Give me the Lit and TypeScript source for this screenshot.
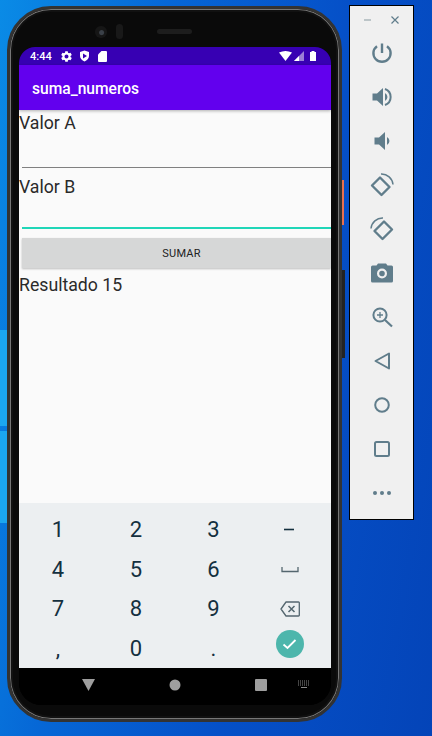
import { LitElement, html, css, svg } from 'lit';
import { customElement } from 'lit/decorators.js';

const TOOL_ICONS = [
  // power
  svg`<path d="M12 2.500v9.500" fill="none" stroke="currentColor" stroke-width="2.400"/><path d="M7 5.200a8.600 8.600 0 1 0 10 0" fill="none" stroke="currentColor" stroke-width="2.400"/>`,
  // volume up
  svg`<path d="M2.500 8.500v7h4.500l6 5.500V3L7 8.500z" fill="currentColor"/><path d="M15 8a4.500 4.500 0 0 1 0 8z" fill="currentColor"/><path d="M15 4a8.500 8.500 0 0 1 0 16" fill="none" stroke="currentColor" stroke-width="2"/>`,
  // volume down
  svg`<path d="M4.500 8.500v7H9l6 5.500V3L9 8.500z" fill="currentColor"/><path d="M17 8a4.500 4.500 0 0 1 0 8z" fill="currentColor"/>`,
  // rotate left
  svg`<path d="M2 12.500 10 4.500 19.500 14 11.500 22z" fill="none" stroke="currentColor" stroke-width="2.400" stroke-linejoin="round"/><path d="M11 1a11.500 11.500 0 0 1 12 10.500" fill="none" stroke="currentColor" stroke-width="1.500"/>`,
  // rotate right
  svg`<path d="M22 12.500 14 4.500 4.500 14 12.500 22z" fill="none" stroke="currentColor" stroke-width="2.400" stroke-linejoin="round"/><path d="M13 1A11.500 11.500 0 0 0 1 11.500" fill="none" stroke="currentColor" stroke-width="1.500"/>`,
  // camera
  svg`<path fill-rule="evenodd" fill="currentColor" d="M8 2.500 6.500 4.500H2.500A1.500 1.500 0 0 0 1 6v14a1.500 1.500 0 0 0 1.500 1.500h19A1.500 1.500 0 0 0 23 20V6a1.500 1.500 0 0 0-1.500-1.500h-4L16 2.500zM12 7.500a5 5 0 1 1 0 10 5 5 0 0 1 0-10zm0 2.200a2.800 2.800 0 1 0 0 5.600 2.800 2.800 0 0 0 0-5.600z"/>`,
  // zoom
  svg`<circle cx="10" cy="10" r="6.600" fill="none" stroke="currentColor" stroke-width="2"/><path d="M15 15l7 6.500" fill="none" stroke="currentColor" stroke-width="2.200"/><path d="M10 7v6M7 10h6" fill="none" stroke="currentColor" stroke-width="1.300"/>`,
  // back
  svg`<path d="M19 4.500v15L5.500 12z" fill="none" stroke="currentColor" stroke-width="2" stroke-linejoin="round"/>`,
  // home
  svg`<circle cx="12" cy="12" r="6.800" fill="none" stroke="currentColor" stroke-width="2"/>`,
  // overview
  svg`<rect x="5" y="5" width="14" height="14" rx="1.500" fill="none" stroke="currentColor" stroke-width="2"/>`,
  // more
  svg`<circle cx="5" cy="12" r="2" fill="currentColor"/><circle cx="12" cy="12" r="2" fill="currentColor"/><circle cx="19" cy="12" r="2" fill="currentColor"/>`,
];

const KEYS = ['1', '2', '3', '-', '4', '5', '6', 'space', '7', '8', '9', 'del', ',', '0', '.', 'ok'];

@customElement('app-root')
export class AppRoot extends LitElement {
  static styles = css`
    :host {
      display: block;
      position: relative;
      width: 432px;
      height: 736px;
      overflow: hidden;
      font-family: Roboto, sans-serif;
      background: linear-gradient(100deg, #0a8be6 0%, #0667d6 30%, #0550c8 62%, #0444b8 100%);
    }

    .pane {
      position: absolute;
      left: 0;
      width: 8px;
      background: #1ba6f0;
    }

    .pane.one {
      top: 330px;
      height: 96px;
    }

    .pane.two {
      top: 431px;
      height: 92px;
    }

    .phone {
      position: absolute;
      left: 7px;
      top: 6px;
      width: 335px;
      height: 716px;
      box-sizing: border-box;
      padding: 38px 8px 14px 9px;
      border-radius: 44px;
      background: #0a0a0a;
      border: 3px solid #333;
      box-shadow: inset 0 0 0 1px #777, inset 0 0 0 3px #111;
    }

    .camera {
      position: absolute;
      left: 85px;
      top: 17px;
      width: 12px;
      height: 12px;
      border-radius: 50%;
      background: radial-gradient(circle at 55% 55%, #3a4048 0 2px, #161616 3px);
    }

    .sensor {
      position: absolute;
      left: 106px;
      top: 15px;
      width: 7px;
      height: 15px;
      border-radius: 4px;
      background: #191919;
    }

    .speaker {
      position: absolute;
      left: 147px;
      top: 20px;
      width: 35px;
      height: 5px;
      border-radius: 3px;
      background: #1d1d1d;
    }

    .btn-orange {
      position: absolute;
      left: 342px;
      top: 180px;
      width: 2px;
      height: 45px;
      background: #e8704f;
    }

    .btn-dark {
      position: absolute;
      left: 342px;
      top: 270px;
      width: 3px;
      height: 88px;
      background: #232323;
    }

    .screen {
      display: flex;
      flex-direction: column;
      height: 100%;
      border-radius: 16px 16px 22px 22px;
      overflow: hidden;
      background: #000;
    }

    .status {
      flex: 0 0 18px;
      display: flex;
      align-items: center;
      gap: 6px;
      padding: 0 15px 0 11px;
      background: #3700b3;
      color: #fff;
      font-size: 11px;
      font-weight: 500;
    }

    .status svg {
      display: block;
    }

    .status .time {
      margin-right: 2px;
    }

    .status .spacer {
      flex: 1;
    }

    .status .right {
      display: flex;
      align-items: center;
      gap: 2px;
    }

    .appbar {
      flex: 0 0 45px;
      display: flex;
      align-items: center;
      box-sizing: border-box;
      padding: 2px 0 0 13px;
      background: #6200ee;
      color: #fff;
      font-size: 15.600px;
      font-weight: 500;
      box-shadow: 0 1px 3px rgba(0, 0, 0, 0.3);
      position: relative;
    }

    .content {
      flex: 0 0 393px;
      display: flex;
      flex-direction: column;
      background: #fafafa;
      color: #2a2a2a;
      font-size: 17.700px;
      line-height: 21px;
    }

    .label {
      height: 21px;
      margin-top: 3px;
    }

    .field {
      height: 34px;
      margin-left: 3px;
      border-bottom: 1px solid #808080;
      box-sizing: border-box;
    }

    .field.focus {
      height: 31px;
      border-bottom: 2px solid #1fd6b8;
    }

    .gap-b {
      margin-top: 9px;
    }

    .button {
      height: 30px;
      margin: 9px 0 0 3px;
      padding-left: 10px;
      display: flex;
      align-items: center;
      justify-content: center;
      background: #d6d7d7;
      color: #222;
      font-size: 11px;
      box-shadow: 0 1px 2px rgba(0, 0, 0, 0.25);
      letter-spacing: 0.2px;
    }

    .result {
      margin-top: 7px;
    }

    .keyboard {
      flex: 0 0 164px;
      display: grid;
      grid-template-columns: 78px 78px 77px 75px;
      grid-auto-rows: 39.500px;
      background: #eceff1;
      color: #14303f;
      font-size: 22px;
      padding-top: 7px;
      box-sizing: border-box;
    }

    .key {
      display: flex;
      align-items: center;
      justify-content: center;
      height: 39.500px;
    }

    .key.low {
      align-items: flex-end;
      padding-bottom: 7px;
      box-sizing: border-box;
    }

    .ok {
      width: 28px;
      height: 28px;
      border-radius: 50%;
      background: #4db6ac;
      display: flex;
      align-items: center;
      justify-content: center;
      margin-top: -8px;
    }

    .nav {
      flex: 1;
      display: flex;
      align-items: center;
      padding: 0 0 4px 63px;
      background: #000;
      box-sizing: border-box;
    }

    .nav svg {
      display: block;
    }

    .nav .circle {
      margin-left: 74px;
    }

    .nav .square {
      margin-left: 74px;
    }

    .nav .kbd {
      margin-left: 30px;
    }

    .toolbar {
      position: absolute;
      left: 349px;
      top: 5px;
      width: 65px;
      height: 515px;
      box-sizing: border-box;
      border: 1px solid #000;
      background: #f0f0f0;
      display: flex;
      flex-direction: column;
      align-items: center;
      color: #607d8b;
    }

    .win {
      height: 25px;
      align-self: stretch;
      display: flex;
      align-items: center;
      justify-content: space-between;
      padding: 2px 14px 0 14px;
      box-sizing: border-box;
    }

    .tool {
      flex: 0 0 44px;
      display: flex;
      align-items: center;
      justify-content: center;
    }
  `;

  private renderKey(key: string) {
    if (key === 'space') {
      return html`<div class="key">
        <svg width="18" height="7" viewBox="0 0 18 7"><path d="M1 1v4.500h16V1" fill="none" stroke="#54666f" stroke-width="1.300" /></svg>
      </div>`;
    }
    if (key === 'del') {
      return html`<div class="key">
        <svg width="20" height="16" viewBox="0 0 20 16">
          <path d="M6 1h12.500a.8.8 0 0 1 .8.8v12.400a.8.8 0 0 1-.8.8H6L1 8z" fill="none" stroke="#54666f" stroke-width="1.300" stroke-linejoin="round" />
          <path d="M8.500 5l6 6M14.500 5l-6 6" stroke="#54666f" stroke-width="1.500" />
        </svg>
      </div>`;
    }
    if (key === 'ok') {
      return html`<div class="key">
        <div class="ok">
          <svg width="15" height="12" viewBox="0 0 15 12"><path d="M1.500 6.500 5.500 10 13.500 2" fill="none" stroke="#fff" stroke-width="1.800" /></svg>
        </div>
      </div>`;
    }
    if (key === '-') {
      return html`<div class="key">
        <svg width="11" height="3" viewBox="0 0 11 3"><rect width="10" height="1.600" y="0.700" fill="#14303f" /></svg>
      </div>`;
    }
    const low = key === ',' || key === '.';
    return html`<div class="key ${low ? 'low' : ''}">${key}</div>`;
  }

  render() {
    return html`
      <div class="pane one"></div>
      <div class="pane two"></div>
      <div class="phone">
        <div class="camera"></div>
        <div class="sensor"></div>
        <div class="speaker"></div>
        <div class="screen">
          <div class="status">
            <span class="time">4:44</span>
            <svg width="13" height="13" viewBox="0 0 26 26"><path fill="#fff" fill-rule="evenodd" d="M21 14.200a8 8 0 0 0 0-2.400l2.600-2-2.500-4.300-3 1.200a8 8 0 0 0-2.100-1.200L15.500 2.300h-5L10 5.500a8 8 0 0 0-2.100 1.200l-3-1.200-2.500 4.300 2.600 2a8 8 0 0 0 0 2.400l-2.600 2 2.500 4.300 3-1.200a8 8 0 0 0 2.100 1.200l.5 3.200h5l.5-3.200a8 8 0 0 0 2.100-1.200l3 1.200 2.500-4.300zM13 17a4 4 0 1 1 0-8 4 4 0 0 1 0 8z" /></svg>
            <svg width="11" height="12" viewBox="0 0 22 24"><path fill="#fff" fill-rule="evenodd" d="M11 1 2 4v8c0 5 4 9 9 11 5-2 9-6 9-11V4zM8 7l8 5-8 5z" /></svg>
            <svg width="9" height="11" viewBox="0 0 18 22" style="margin-left:2px"><path fill="#fff" d="M7 0h9a2 2 0 0 1 2 2v18a2 2 0 0 1-2 2H2a2 2 0 0 1-2-2V7z" /></svg>
            <span class="spacer"></span>
            <span class="right">
              <svg width="13" height="10" viewBox="0 0 13 10"><path fill="#fff" d="M0 1.500Q6.500-1.500 13 1.500L6.500 10z" /></svg>
              <svg width="10" height="10" viewBox="0 0 10 10"><path fill="#9a7fd6" d="M10 0v10H0z" /><path fill="#fff" d="M5 5v5H0z" /></svg>
              <svg width="6" height="10" viewBox="0 0 6 10" style="margin-left:4px"><path fill="#fff" d="M1.500 0h3v1H6v9H0V1h1.500z" /></svg>
            </span>
          </div>
          <div class="appbar">suma_numeros</div>
          <div class="content">
            <div class="label">Valor A</div>
            <div class="field"></div>
            <div class="label gap-b">Valor B</div>
            <div class="field focus"></div>
            <div class="button">SUMAR</div>
            <div class="result">Resultado 15</div>
          </div>
          <div class="keyboard">${KEYS.map((k) => this.renderKey(k))}</div>
          <div class="nav">
            <svg width="13" height="12" viewBox="0 0 13 12"><path fill="#9e9e9e" d="M0 0h13L6.500 12z" /></svg>
            <svg class="circle" width="12" height="12" viewBox="0 0 12 12"><circle cx="6" cy="6" r="5.500" fill="#9e9e9e" /></svg>
            <svg class="square" width="12" height="12" viewBox="0 0 12 12"><rect width="12" height="12" rx="1" fill="#9e9e9e" /></svg>
            <svg class="kbd" width="14" height="9" viewBox="0 0 14 9"><path d="M1 1h12M1 3h12M1 5h12" stroke="#8a8a8a" stroke-dasharray="1 1" /><path d="M4 7.500h6" stroke="#8a8a8a" /></svg>
          </div>
        </div>
      </div>
      <div class="btn-orange"></div>
      <div class="btn-dark"></div>
      <div class="toolbar">
        <div class="win">
          <svg width="8" height="8" viewBox="0 0 8 8"><path d="M0 4h7" stroke="#9aa8ae" stroke-width="1.200" /></svg>
          <svg width="8" height="8" viewBox="0 0 8 8"><path d="M.5.500l7 7M7.500.500l-7 7" stroke="#607d8b" stroke-width="1.200" /></svg>
        </div>
        ${TOOL_ICONS.map(
          (icon) => html`<div class="tool"><svg width="24" height="24" viewBox="0 0 24 24">${icon}</svg></div>`
        )}
      </div>
    `;
  }
}
